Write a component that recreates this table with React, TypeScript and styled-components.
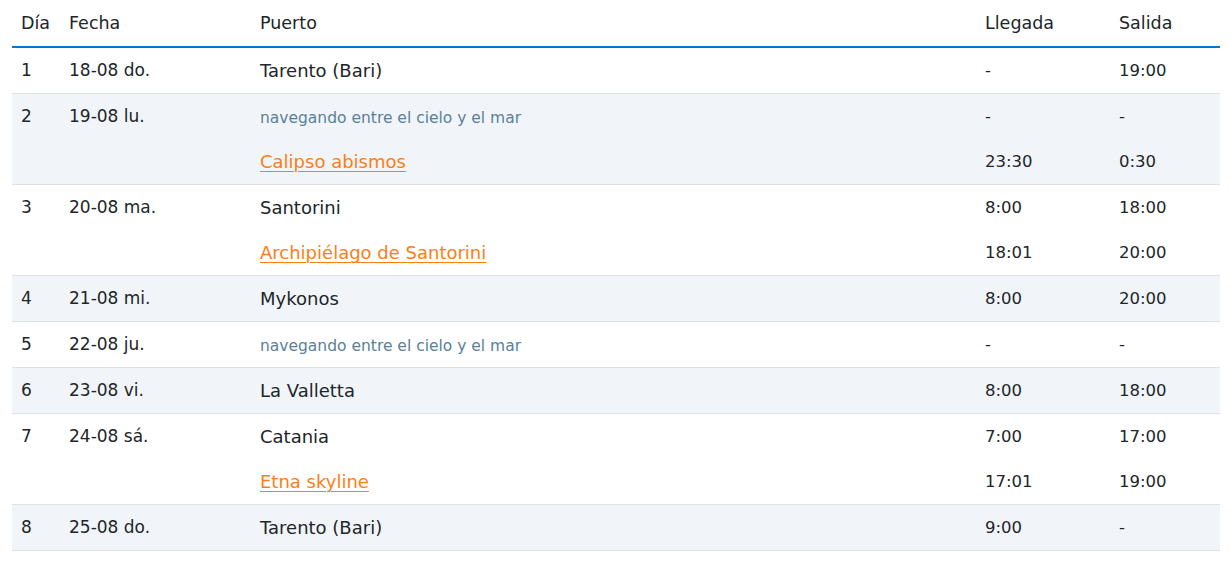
import React from "react";
import styled, { createGlobalStyle } from "styled-components";

const Global = createGlobalStyle`
  html, body { margin: 0; padding: 0; background: #ffffff; }
  body { font-family: "DejaVu Sans", "Noto Sans", sans-serif; color: #212529; }
`;

const Wrap = styled.div`
  padding: 0 11px 0 12px;
`;

const Table = styled.table`
  width: 1208px;
  border-collapse: collapse;
  table-layout: fixed;
  font-size: 17px;
`;

const HeadCell = styled.th<{ $w: number }>`
  box-sizing: border-box;
  width: ${(p) => p.$w}px;
  height: 47px;
  padding: 0 9px 1px;
  text-align: left;
  font-weight: 400;
  font-size: 17.5px;
  color: #212529;
  border-bottom: 2px solid #0077cc;
  vertical-align: middle;
  white-space: nowrap;
`;

const Row = styled.tr<{ $alt: boolean }>`
  background: ${(p) => (p.$alt ? "#f1f5f9" : "#ffffff")};
  border-bottom: 1px solid #dee2e6;
`;

const Cell = styled.td<{ $size: number }>`
  padding: 0 9px;
  vertical-align: top;
  font-size: ${(p) => p.$size}px;
`;

const Line = styled.div`
  height: 45px;
  line-height: 45px;
  white-space: nowrap;
`;

const Sailing = styled.span`
  font-size: 15.5px;
  color: #5a8199;
`;

const Excursion = styled.a`
  color: #fd7e14;
  text-decoration: underline;
  text-decoration-thickness: 1px;
  text-underline-offset: 3px;
`;

type Stop = { name: string; kind: "port" | "sea" | "exc"; arr: string; dep: string };
type Day = { n: number; date: string; stops: Stop[] };

const SEA = "navegando entre el cielo y el mar";

const days: Day[] = [
  { n: 1, date: "18-08 do.", stops: [{ name: "Tarento (Bari)", kind: "port", arr: "-", dep: "19:00" }] },
  {
    n: 2,
    date: "19-08 lu.",
    stops: [
      { name: SEA, kind: "sea", arr: "-", dep: "-" },
      { name: "Calipso abismos", kind: "exc", arr: "23:30", dep: "0:30" },
    ],
  },
  {
    n: 3,
    date: "20-08 ma.",
    stops: [
      { name: "Santorini", kind: "port", arr: "8:00", dep: "18:00" },
      { name: "Archipiélago de Santorini", kind: "exc", arr: "18:01", dep: "20:00" },
    ],
  },
  { n: 4, date: "21-08 mi.", stops: [{ name: "Mykonos", kind: "port", arr: "8:00", dep: "20:00" }] },
  { n: 5, date: "22-08 ju.", stops: [{ name: SEA, kind: "sea", arr: "-", dep: "-" }] },
  { n: 6, date: "23-08 vi.", stops: [{ name: "La Valletta", kind: "port", arr: "8:00", dep: "18:00" }] },
  {
    n: 7,
    date: "24-08 sá.",
    stops: [
      { name: "Catania", kind: "port", arr: "7:00", dep: "17:00" },
      { name: "Etna skyline", kind: "exc", arr: "17:01", dep: "19:00" },
    ],
  },
  { n: 8, date: "25-08 do.", stops: [{ name: "Tarento (Bari)", kind: "port", arr: "9:00", dep: "-" }] },
];

const StopName = ({ s }: { s: Stop }) => {
  if (s.kind === "sea") return <Sailing>{s.name}</Sailing>;
  if (s.kind === "exc") return <Excursion href="#">{s.name}</Excursion>;
  return <>{s.name}</>;
};

export default function App() {
  return (
    <Wrap>
      <Global />
      <Table>
        <thead>
          <tr>
            <HeadCell $w={48}>Día</HeadCell>
            <HeadCell $w={191}>Fecha</HeadCell>
            <HeadCell $w={725}>Puerto</HeadCell>
            <HeadCell $w={134}>Llegada</HeadCell>
            <HeadCell $w={110}>Salida</HeadCell>
          </tr>
        </thead>
        <tbody>
          {days.map((d) => (
            <Row key={d.n} $alt={d.n % 2 === 0}>
              <Cell $size={17}>
                <Line>{d.n}</Line>
              </Cell>
              <Cell $size={17}>
                <Line>{d.date}</Line>
              </Cell>
              <Cell $size={18}>
                {d.stops.map((s, i) => (
                  <Line key={i}>
                    <StopName s={s} />
                  </Line>
                ))}
              </Cell>
              <Cell $size={16.5}>
                {d.stops.map((s, i) => (
                  <Line key={i}>{s.arr}</Line>
                ))}
              </Cell>
              <Cell $size={16.5}>
                {d.stops.map((s, i) => (
                  <Line key={i}>{s.dep}</Line>
                ))}
              </Cell>
            </Row>
          ))}
        </tbody>
      </Table>
    </Wrap>
  );
}
